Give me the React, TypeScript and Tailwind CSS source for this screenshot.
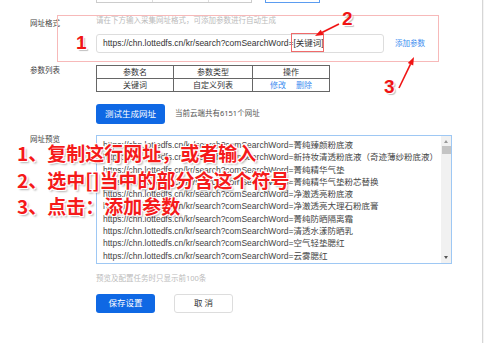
import React from "react";

const rows = [
  "菁纯臻颜粉底液",
  "新持妆清透粉底液（奇迹薄纱粉底液）",
  "菁纯精华气垫",
  "菁纯精华气垫粉芯替换",
  "净澈透亮粉底液",
  "净澈透亮大理石粉底膏",
  "菁纯防晒隔离霜",
  "清透水漾防晒乳",
  "空气轻垫腮红",
  "云雾腮红",
];

const base = "https://chn.lottedfs.cn/kr/search?comSearchWord=";

export default function App() {
  return (
    <div className="relative h-[343px] w-[484px] overflow-hidden bg-white font-['Noto_Sans','Noto_Sans_CJK_SC',sans-serif] text-[#333]">
      {/* cut-off controls from the section above */}
      <div className="-mt-[17px] flex h-[20px] pl-[96px]">
        <div className="flex h-full w-[156px] border border-[#ccc]">
          <div className="w-[56px] border-r border-[#ddd]" />
          <div className="w-[56px] border-r border-[#ddd]" />
          <div className="flex-1" />
        </div>
        <div className="ml-[13px] h-full w-[55px] border border-[#5b9cf0]" />
      </div>

      {/* 网址格式 */}
      <div className="mt-[12px] flex">
        <div className="w-[96px] pl-[30px] pt-[3px] text-[7.5px] leading-[10px] text-[#444]">网址格式</div>
        <div>
          <p className="text-[7.5px] leading-[10px] text-[#bbb]">请在下方输入采集网址格式，可添加参数进行自动生成</p>
          <div className="mt-[9px] flex items-center">
            <div className="flex h-[19px] w-[288px] items-center rounded-[3px] border border-[#ddd] pl-[6px] font-['Liberation_Sans','Noto_Sans_CJK_SC',sans-serif] text-[8.5px] text-[#333]">
              {base}[关键词]
            </div>
            <span className="ml-[11px] text-[7.5px] text-[#3d8ef0]">添加参数</span>
          </div>
        </div>
      </div>

      {/* 参数列表 */}
      <div className="mt-[12px] flex">
        <div className="w-[96px] pl-[30px] text-[7.5px] leading-[10px] text-[#444]">参数列表</div>
        <table className="w-[234px] border-collapse text-center text-[8px] leading-none">
          <tbody>
            <tr className="h-[13px]">
              <td className="w-[77px] border border-[#666]">参数名</td>
              <td className="w-[79px] border border-[#666]">参数类型</td>
              <td className="border border-[#666]">操作</td>
            </tr>
            <tr className="h-[13px]">
              <td className="border border-[#666]">关键词</td>
              <td className="border border-[#666]">自定义列表</td>
              <td className="border border-[#666] text-[#3d8ef0]">
                修改<span className="ml-[10px]">删除</span>
              </td>
            </tr>
          </tbody>
        </table>
      </div>

      {/* 测试按钮 */}
      <div className="mt-[12px] flex items-center pl-[96px]">
        <button className="h-[20px] w-[69px] rounded-[3px] bg-[#0f68e4] text-[8.5px] text-white">测试生成网址</button>
        <span className="ml-[10px] text-[7.5px] text-[#555]">当前云端共有6151个网址</span>
      </div>

      {/* 网址预览 */}
      <div className="mt-[11px] flex">
        <div className="-mt-px w-[96px] pl-[30px] text-[7.5px] leading-[10px] text-[#444]">网址预览</div>
        <div className="relative h-[129px] w-[356px] overflow-hidden border border-[#9ec8f4] pl-[6px] pt-[3px] font-['Liberation_Sans','Noto_Sans_CJK_SC',sans-serif]">
          {rows.map((r) => (
            <p key={r} className="whitespace-nowrap text-[8.5px] leading-[12.3px] text-[#444]">
              {base}
              {r}
            </p>
          ))}
          <div className="absolute bottom-0 right-0 top-0 flex w-[10px] flex-col items-center bg-[#f1f1f1]">
            <span className="mt-[4px] h-0 w-0 border-x-[2.5px] border-b-[3px] border-x-transparent border-b-[#999]" />
            <span className="mt-[3px] h-[8px] w-[9px] bg-[#c4c4c4]" />
            <span className="mb-[4px] mt-auto h-0 w-0 border-x-[2.5px] border-t-[3px] border-x-transparent border-t-[#555]" />
          </div>
        </div>
      </div>

      <p className="mt-[9px] pl-[96px] text-[7.5px] leading-[10px] text-[#bbb]">预览及配置任务时只显示前100条</p>

      <div className="mt-[11px] flex pl-[96px]">
        <button className="h-[19px] w-[59px] rounded-[3px] bg-[#0f68e4] text-[8.5px] text-white">保存设置</button>
        <button className="ml-[19px] h-[19px] w-[59px] rounded-[3px] border border-[#ddd] bg-white text-[8.5px] text-[#333]">取 消</button>
      </div>

      {/* window edge */}
      <div className="absolute right-0 top-0 h-full w-[2px] border-l border-[#d6d6d6] bg-[#f4f4f4]" />

      {/* annotations */}
      <div className="absolute left-[57px] top-[15px] h-[47px] w-[382px] border border-[#f7b9b9]" />
      <div className="absolute left-[291px] top-[33px] h-[19px] w-[33px] border border-[#f06a6a]" />
      <span className="absolute left-[76px] top-[33px] font-['Liberation_Sans',sans-serif] text-[19px] font-bold leading-[20px] text-[#f01414] [text-shadow:1px_1px_0_#fff,2px_2px_1px_rgba(0,0,0,0.25)]">1</span>
      <span className="absolute left-[342px] top-[9px] font-['Liberation_Sans',sans-serif] text-[19px] font-bold leading-[20px] text-[#f01414] [text-shadow:1px_1px_0_#fff,2px_2px_1px_rgba(0,0,0,0.25)]">2</span>
      <span className="absolute left-[384px] top-[77px] font-['Liberation_Sans',sans-serif] text-[19px] font-bold leading-[20px] text-[#f01414] [text-shadow:1px_1px_0_#fff,2px_2px_1px_rgba(0,0,0,0.25)]">3</span>
      <svg className="pointer-events-none absolute left-0 top-0" width="484" height="343">
        <line x1="339" y1="24" x2="322" y2="32.5" stroke="#f01414" strokeWidth="1.6" />
        <polygon points="315,36 323.5,35.1 320.8,29.7" fill="#f01414" />
        <line x1="399" y1="88" x2="410.5" y2="64.2" stroke="#f01414" strokeWidth="1.6" />
        <polygon points="414,57 413.2,65.5 407.8,62.9" fill="#f01414" />
      </svg>
      <div className="absolute left-[17px] top-[140px] font-['Noto_Sans_CJK_SC',sans-serif] text-[19px] font-bold leading-[26.5px] text-[#f51a1a] [text-shadow:-1px_-1px_0_#fff,1px_-1px_0_#fff,-1px_1px_0_#fff,1px_1px_0_#fff,2px_2px_2px_rgba(0,0,0,0.3)]">
        <p>1、复制这行网址，或者输入</p>
        <p>2、选中[]当中的部分含这个符号</p>
        <p>3、点击：添加参数</p>
      </div>
    </div>
  );
}
